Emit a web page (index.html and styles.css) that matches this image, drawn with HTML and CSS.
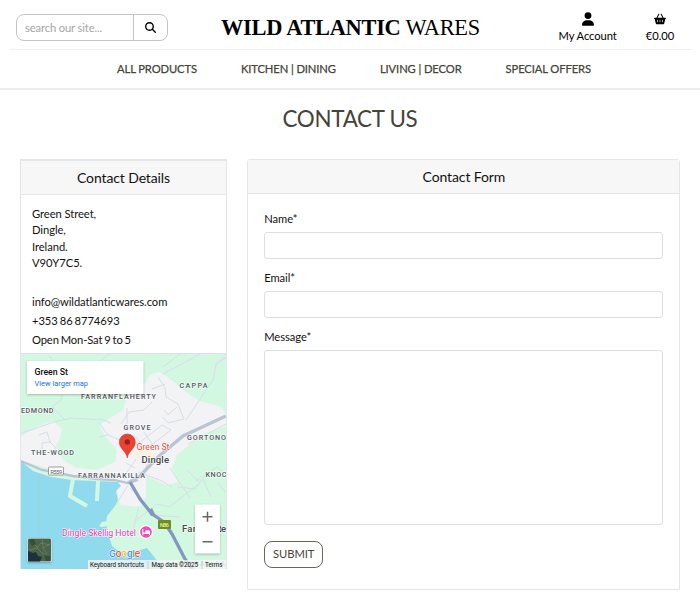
FILE: index.html
```html
<!DOCTYPE html>
<html lang="en">
<head>
<meta charset="utf-8">
<title>Contact Us | Wild Atlantic Wares</title>
<link rel="stylesheet" href="styles.css">
</head>
<body>
<header class="site-header">
  <div class="topbar">
    <form class="search">
      <input class="search-input" type="text" placeholder="search our site...">
      <button class="search-btn" type="button" aria-label="Search">
        <svg width="11" height="11" viewBox="0 0 512 512"><path d="M416 208c0 45.900-14.900 88.300-40 122.700L502.600 457.400c12.500 12.500 12.500 32.800 0 45.300s-32.800 12.500-45.300 0L330.700 376c-34.400 25.200-76.800 40-122.700 40C93.100 416 0 322.900 0 208S93.100 0 208 0S416 93.100 416 208zM208 352a144 144 0 1 0 0-288 144 144 0 1 0 0 288z"/></svg>
      </button>
    </form>
    <a class="brand"><strong>WILD ATLANTIC</strong> WARES</a>
    <div class="tools">
      <a class="tool account">
        <svg width="12" height="14" viewBox="0 0 448 512"><path d="M224 256A128 128 0 1 0 224 0a128 128 0 1 0 0 256zm-45.700 48C79.800 304 0 383.800 0 482.300C0 498.700 13.300 512 29.700 512H418.300c16.400 0 29.700-13.300 29.700-29.700C448 383.800 368.200 304 269.700 304H178.300z"/></svg>
        <span>My Account</span>
      </a>
      <a class="tool basket">
        <svg width="12" height="12" viewBox="0 0 576 512"><path fill-rule="evenodd" d="M253.300 35.100c6.100-11.800 1.500-26.300-10.200-32.400s-26.300-1.500-32.400 10.200L117.600 192H32c-17.700 0-32 14.300-32 32s14.300 32 32 32L83.900 463.500C91 492 116.600 512 146 512H430c29.400 0 55-20 62.100-48.500L544 256c17.700 0 32-14.300 32-32s-14.300-32-32-32H458.400L365.300 12.900C359.200 1.200 344.700-3.400 332.900 2.700s-16.300 20.600-10.200 32.400L404.300 192H171.700L253.300 35.100zM192 304v96c0 8.800-7.200 16-16 16s-16-7.200-16-16V304c0-8.800 7.200-16 16-16s16 7.200 16 16zm112 0v96c0 8.800-7.200 16-16 16s-16-7.200-16-16V304c0-8.800 7.200-16 16-16s16 7.200 16 16zm112 0v96c0 8.800-7.200 16-16 16s-16-7.200-16-16V304c0-8.800 7.200-16 16-16s16 7.200 16 16z"/></svg>
        <span>€0.00</span>
      </a>
    </div>
  </div>
  <nav class="nav">
    <a>ALL PRODUCTS</a><a>KITCHEN | DINING</a><a>LIVING | DECOR</a><a>SPECIAL OFFERS</a>
  </nav>
</header>

<main>
  <h1>CONTACT US</h1>
  <div class="columns">
    <section class="details">
      <h2>Contact Details</h2>
      <div class="info">
        <address>Green Street,<br>Dingle,<br>Ireland.<br>V90Y7C5.</address>
        <p>info@wildatlanticwares.com</p>
        <p>+353 86 8774693</p>
        <p class="hours">Open Mon-Sat 9 to 5</p>
      </div>
      <svg class="map" viewBox="21 354 205 215" width="205" height="215">
        <rect x="21" y="354" width="205" height="215" fill="#d3f8e2"/>
        <path fill="#f3f2f5" d="M20 437l18-11 15-5 9 8-2 9-4 8 7 14 14 8 20 2 18-8 2-12-12-14-6-11 24-15 5-16 8-9 10-2 4-8 9-3 7 4 24 19 12 7 18 4 6 8v12l-24 8-12 10-13 11-5 13 6 14-12 3-20-9v21l-6 10-20-2-6-26-36-2-62-18z"/>
        <path fill="#90daee" d="M21 461l12 10 18 6 21 3 46 2 3 4-5 5 2 9-3 6-8 10-1 8 2 9 4 13 6 5 12 2 17-5 8 10 10 12H21z"/>
        <g fill="none" stroke="#d3f8e2" stroke-width="4" stroke-linejoin="round"><path d="M73 479l-3 17 17 10M98 481l-1 20"/></g>
        <path fill="#d3f8e2" d="M99 526l3-4 6-1-1 5-5 1z"/>
        <g fill="none" stroke="#d7dee8" stroke-width="1">
          <path d="M22 433l32-11 18-4 31 2 8 3M65 420l-13-13 9-7 3-13-4-14-10-17M109 354l-13 10 10 19M180 354l-17 13M163 374l37-20M226 354l-10 11-3 15-27 40M214 365l12-7M158 377l7 11 1 9 12 7 6 15M165 384l-13 5M177 407l-9 8-4-5M184 419l-16 4-5-6M135 446l27-21 9 5-26 20M145 451l-9-14M152 444l-8-12M121 424l8-12 15-2 8-8M127 408v16M39 435l8-3 3 10-8 1v10M50 442l6 6-3 8M99 423l9 12 18 8M108 435l-9 2M136 459l-13 19M126 463l9 5M138 472l24 9 10 6M150 458l-9 21M196 481l21-14 5 4M226 424l-26 14-12 6M218 483l7 9M211 497l-8-18-8 10-18-2M188 471l12 12-31 24-12-3-22 17M170 468l20 30M139 506l-8 33M153 515l27 2M128 485l-12 20M142 501l-12-13"/>
        </g>
        <path fill="none" stroke="#b3c5d2" stroke-width=".6" d="M39 475v82"/>
        <path fill="none" stroke="#b9c4d5" stroke-width="2.300" d="M21 461l21 9 31 6 24 3 17 1 14 3 10-3"/>
        <path fill="none" stroke="#b9c4d5" stroke-width="3.300" d="M128 483l12-7 18-19 25-21 43-20"/>
        <path fill="none" stroke="#fff0cd" stroke-width="4" opacity=".8" d="M135 454l9-4 11 9"/>
        <path fill="none" stroke="#8299bd" stroke-width="3.300" stroke-linejoin="round" d="M130 482l10 17 12 15 12 8 8 12 13 25 7 10"/>
        <path fill="#8299bd" d="M148 511l4-3 3 6-4 2z"/>
        <g class="places">
          <text x="81" y="399" textLength="75">FARRANFLAHERTY</text>
          <text x="179.500" y="388" textLength="28">CAPPA</text>
          <text x="21" y="413" textLength="32.500">EDMOND</text>
          <text x="123.500" y="430" textLength="27">GROVE</text>
          <text x="187" y="440" textLength="39">GORTONO</text>
          <text x="31" y="455" textLength="43">THE-WOOD</text>
          <text x="78" y="478" textLength="67">FARRANNAKILLA</text>
          <text x="205.500" y="477" textLength="21">KNOC</text>
        </g>
        <g class="town"><text x="141.500" y="463" textLength="27.500">Dingle</text><text x="182" y="532" textLength="14">Far</text><text x="218.500" y="532" textLength="7.500">te</text></g>
        <text class="pin-label" x="136.500" y="449.500" textLength="33">Green St</text>
        <path fill="#ea4335" stroke="#c92e22" stroke-width=".5" d="M127.300 458c-1-7-8-9-8-16a8 8 0 0 1 16 0c0 7-7 9-8 16z"/>
        <circle cx="127.300" cy="442" r="2.700" fill="#9c2019"/>
        <rect x="48.500" y="467" width="15" height="8" rx="1" fill="#fff" stroke="#777" stroke-width=".7"/>
        <text class="road" x="50.500" y="473.600" textLength="11.500">R559</text>
        <rect x="158" y="520" width="13" height="9" rx="1" fill="#718c1e"/>
        <text class="road national" x="160" y="526.800" textLength="9">N86</text>
        <text class="hotel" x="62" y="535.500" textLength="74">Dingle Skellig Hotel</text>
        <circle cx="146" cy="532" r="7" fill="#fff"/><circle cx="146" cy="532" r="5.800" fill="#fc45ba"/>
        <path fill="#fff" d="M142.300 529h1v3.500h2.200v-2.300h3.500l1 1v4h-1v-1.200h-5.700v1.200h-1z"/>
        <text class="google" x="109" y="556.500"><tspan fill="#4285f4">G</tspan><tspan fill="#ea4335">o</tspan><tspan fill="#fbbc04">o</tspan><tspan fill="#4285f4">g</tspan><tspan fill="#34a853">l</tspan><tspan fill="#ea4335">e</tspan></text>
        <g class="ctl">
          <rect x="27" y="361" width="116.500" height="33" fill="#fff"/>
          <rect x="195" y="504.500" width="25" height="49" fill="#fff"/>
        </g>
        <text class="card-title" x="34.500" y="375" textLength="33.500">Green St</text>
        <text class="card-link" x="34.500" y="385.700" textLength="53.500">View larger map</text>
        <path stroke="#666" stroke-width="1.500" fill="none" d="M202.500 516.800h10M207.500 511.800v10M202.500 541.800h10"/>
        <g class="ctl">
          <rect x="27.500" y="538" width="24" height="24" rx="1" fill="#fff"/>
          <rect x="28" y="538.500" width="23" height="23" rx="1" fill="#4c6249"/>
        </g>
        <path fill="#1d3040" d="M28 551l5 2 3-1 2 4 4 1-2 4.500H28z"/>
        <path fill="none" stroke="#82947c" stroke-width=".8" opacity=".6" d="M29 550l8-2 4-5 9 2M37 548l5 5 8 4M42 538l1 10 4 6M31 541l7 7M43 548l7-4"/>
        <path fill="#344f36" d="M29 540l5-1 2 5-4 2zM44 555l6 1v5h-4z"/>
        <text class="places" x="181" y="566" textLength="44" opacity=".5">KILNAGLEA</text>
        <rect x="88" y="560" width="138" height="9" fill="#f5f5f5" opacity=".78"/>
        <g class="legal"><text x="90" y="566.800" textLength="54">Keyboard shortcuts</text><text x="151.500" y="566.800" textLength="46.500">Map data ©2025</text><text x="205" y="566.800" textLength="17.500">Terms</text></g>
        <path stroke="#aaa" stroke-width=".5" d="M148 561v8M202 561v8"/>
      </svg>
    </section>

    <section class="form-card">
      <h2>Contact Form</h2>
      <form class="contact-form">
        <label for="name">Name*</label>
        <input id="name" type="text">
        <label for="email">Email*</label>
        <input id="email" type="text">
        <label for="message">Message*</label>
        <textarea id="message"></textarea>
        <button class="submit" type="button">SUBMIT</button>
      </form>
    </section>
  </div>
</main>
</body>
</html>
```
FILE: styles.css
```css
* { box-sizing: border-box; }
body {
  margin: 0;
  background: #fff;
  color: #111;
  font: 11.2px/16.5px Lato, sans-serif;
  letter-spacing: -.06px;
  overflow: hidden;
}
h1, h2, p { margin: 0; font-weight: 400; }
input, textarea, button { font: inherit; letter-spacing: inherit; }
.site-header { height: 90px; border-bottom: 2px solid #eee; }
.topbar {
  height: 50px;
  margin: 0 8px 0 9px;
  padding-left: 7px;
  border-bottom: 1px solid #f0f0f0;
  display: grid;
  grid-template-columns: 205px 259px 1fr;
}
.search { display: flex; width: 152px; height: 27px; margin-top: 14px; }
.search-input, .search-btn { border: 1px solid #c4c4c4; background: #fff; height: 27px; }
.search-input {
  width: 118px;
  padding: 0 8px;
  border-radius: 8px 0 0 8px;
}
.search-input::placeholder { color: #a5a5a5; opacity: 1; letter-spacing: -.12px; }
.search-btn { width: 35px; margin-left: -1px; padding: 0; border-radius: 0 8px 8px 0; display: grid; place-items: center; }
.brand {
  font: 22.400px/26px "Liberation Serif", serif;
  letter-spacing: -.28px;
  color: #000;
  margin-top: 15px;
  white-space: nowrap;
}
.tools { display: flex; padding-left: 78.500px; gap: 29px; }
.tool { display: flex; flex-direction: column; align-items: center; color: #000; white-space: nowrap; }
.tool svg { margin-top: 12px; height: 14px; }
.tool span { margin-top: 2px; }
.nav {
  height: 38px;
  padding-left: 117px;
  display: flex;
  gap: 44px;
  align-items: center;
  color: #444439;
  -webkit-text-stroke: .25px #444439;
  letter-spacing: -.09px;
  white-space: nowrap;
}
h1 { margin-top: 14px; text-align: center; font-size: 22.400px; line-height: 30px; color: #444439; letter-spacing: -.3px; }
.columns {
  display: grid;
  grid-template-columns: 207px 433px;
  gap: 20.400px;
  padding: 0 20px;
  margin-top: 25px;
  align-items: start;
}
h2 { height: 34px; background: #f7f7f7; text-align: center; font-size: 14px; line-height: 34px; color: #111; border-bottom: 1px solid #e4e7ea; letter-spacing: -.12px; }
.details { border: 1px solid #e2e6ea; border-bottom: 0; }
.details h2 { height: 35px; border-top: 1px solid #e2e6ea; }
.info { height: 159px; padding: 10.500px 11px 0; border-bottom: 1px solid #dde1e5; }
address { font-style: normal; margin-bottom: 20px; }
.info p { line-height: 19.300px; word-spacing: -.8px; }
.map { display: block; font-family: Roboto, sans-serif; letter-spacing: 0; }
.places { font-size: 7.200px; font-weight: 500; fill: #50555b; }
.places text, .town text, .hotel, .pin-label { paint-order: stroke; stroke: #fff; stroke-width: 1px; }
.town { font-size: 9.500px; font-weight: 500; fill: #444; }
.pin-label { font-size: 8.800px; fill: #e54840; }
.road { font-size: 5.500px; fill: #555; }
.national { fill: #e8f2a5; font-weight: 500; }
.hotel { font-size: 8.800px; fill: #e33bb3; }
.google { font: 500 9.300px Inter, sans-serif; letter-spacing: -.1px; paint-order: stroke; stroke: #fff; stroke-width: 1px; }
.ctl { filter: drop-shadow(0 1px 1px rgba(0, 0, 0, .25)); }
.card-title { font-size: 8.800px; font-weight: 500; fill: #111; }
.card-link { font-size: 7.500px; fill: #1a73e8; }
.legal { font-size: 6.300px; fill: #111; }
.hours { letter-spacing: -.12px; }
.form-card { height: 431px; border: 1px solid #e4e7ea; border-radius: 3px 3px 0 0; }
.contact-form { display: flex; flex-direction: column; padding: 17px 16px 0 15.800px; }
.contact-form label { height: 21px; }
.contact-form input, textarea { width: 399px; border: 1px solid #dadfe3; border-radius: 3px; background: #fff; }
.contact-form input { height: 27px; margin-bottom: 11px; }
textarea { height: 175px; display: block; resize: none; }
.submit {
  width: 59px;
  height: 27px;
  margin-top: 16px;
  padding: 0;
  border: 1px solid #66665a;
  border-radius: 8px;
  background: #fff;
  color: #444439;
}
```
